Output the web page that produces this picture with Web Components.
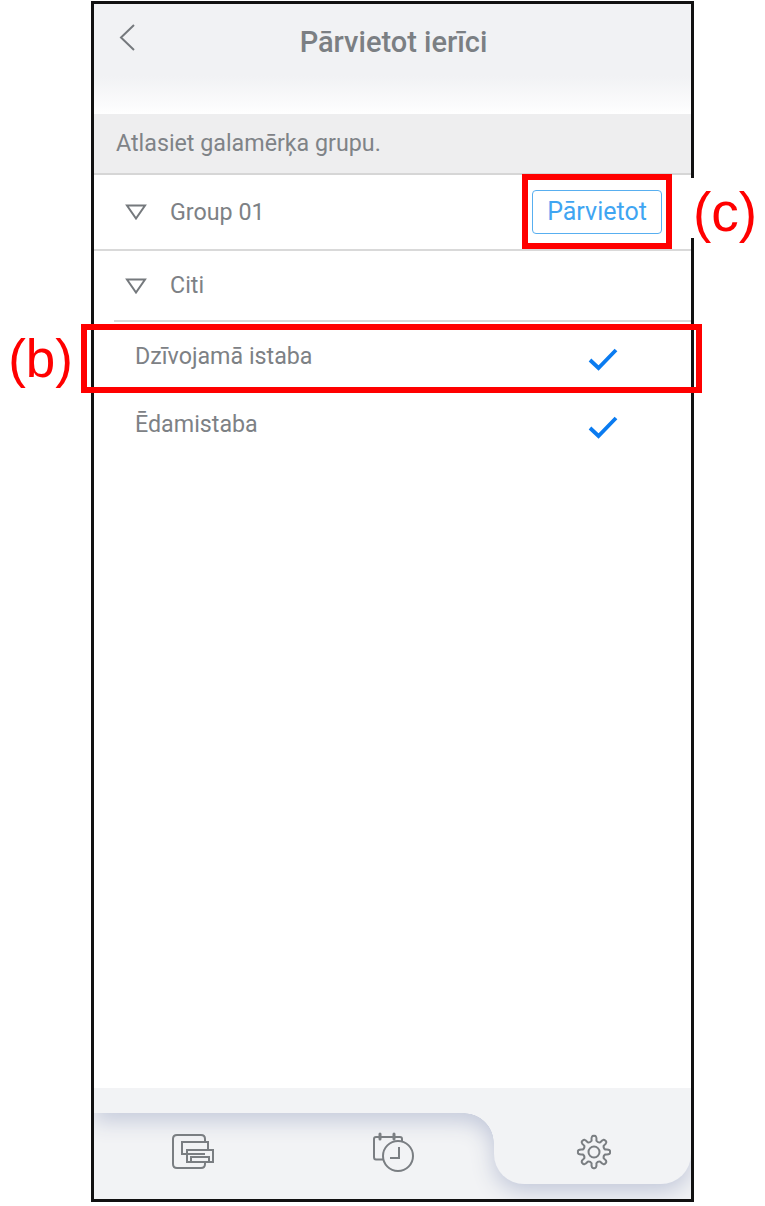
<!DOCTYPE html>
<html lang="lv">
<head>
<meta charset="utf-8">
<title>Pārvietot ierīci</title>
<style>
   html, body { margin: 0; padding: 0; background: #fff; }
   body { font-family: Roboto, "Liberation Sans", sans-serif; }
</style>
</head>
<body>
<phone-frame>
   <app-header title="Pārvietot ierīci"></app-header>
   <hint-strip>Atlasiet galamērķa grupu.</hint-strip>
   <group-row label="Group 01"><move-button>Pārvietot</move-button></group-row>
   <group-row label="Citi" short></group-row>
   <room-row>Dzīvojamā istaba</room-row>
   <room-row>Ēdamistaba</room-row>
   <tab-bar></tab-bar>
   <red-callout slot="overlay" label="(b)" side="left" style="left:-13px;top:320px;width:609px;height:57px"></red-callout>
   <red-callout slot="overlay" label="(c)" side="right" style="left:428px;top:170px;width:138px;height:63px"></red-callout>
</phone-frame>

<script>
// Outer device outline, the overlay slot holds the red annotations
class PhoneFrame extends HTMLElement {
   constructor() {
      super();
      this.attachShadow({ mode: "open" });
      this.shadowRoot.innerHTML = `
         <style>
         :host {
            display: block;
            box-sizing: border-box;
            position: relative;
            width: 603px;
            height: 1201px;
            margin: 1px 0 0 91px;
            border: 3px solid #111;
            color: #7d8185;
            font-size: 23.25px;
         }
         .body {
            display: flex;
            flex-direction: column;
            height: 100%;
         }
         .body ::slotted(tab-bar) { margin-top: auto; }
         </style>
         <div class="body"><slot></slot></div>
         <slot name="overlay"></slot>
      `;
   }
}

class AppHeader extends HTMLElement {
   constructor() {
      super();
      this.attachShadow({ mode: "open" });
      this.shadowRoot.innerHTML = `
         <style>
         :host {
            display: block;
            height: 110px;
            background: linear-gradient(#f1f2f4 0, #f1f2f4 72px, #fcfcfd 104px, #fff 110px);
         }
         .top {
            display: grid;
            grid-template-columns: 62px 1fr 60px;
            align-items: start;
         }
         svg { display: block; margin: 19px 0 0 24px; }
         h1 {
            margin: 19px 0 0;
            text-align: center;
            font-size: 29px;
            line-height: 38px;
            font-weight: 500;
            color: #7b7f83;
         }
         </style>
         <div class="top">
            <svg width="18" height="30" viewBox="0 0 18 30" fill="none" stroke="#75797d" stroke-width="2">
               <path d="M16 2 L3 14.5 L16 27"/>
            </svg>
            <h1>${this.getAttribute("title")}</h1>
         </div>
      `;
   }
}

class HintStrip extends HTMLElement {
   constructor() {
      super();
      this.attachShadow({ mode: "open" });
      this.shadowRoot.innerHTML = `
         <style>
         :host {
            display: block;
            box-sizing: border-box;
            height: 61px;
            padding: 0 0 0 22px;
            line-height: 59px;
            background: #eeeeef;
            border-bottom: 2px solid #d6d6d6;
            color: #7f8387;
         }
         </style>
         <slot></slot>
      `;
   }
}

// Collapsible group row, triangle + name + optional action in the slot
class GroupRow extends HTMLElement {
   constructor() {
      super();
      this.attachShadow({ mode: "open" });
      this.shadowRoot.innerHTML = `
         <style>
         :host {
            display: flex;
            align-items: center;
            box-sizing: border-box;
            height: 76px;
            padding: 0 29px 0 31px;
            border-bottom: 2px solid #d9d9d9;
         }
         :host([short]) {
            height: 71px;
            margin-left: 20px;
            padding-left: 11px;
         }
         :host([short]) .name { margin-bottom: 2px; }
         svg { flex: none; }
         .name { margin-left: 23px; flex: 1; }
         </style>
         <svg width="22" height="16" viewBox="0 0 22 16" fill="none" stroke="#75797d" stroke-width="2">
            <path d="M2 1.5 H20 L11 14.5 Z"/>
         </svg>
         <span class="name">${this.getAttribute("label")}</span>
         <slot></slot>
      `;
   }
}

class MoveButton extends HTMLElement {
   constructor() {
      super();
      this.attachShadow({ mode: "open" });
      this.shadowRoot.innerHTML = `
         <style>
         :host {
            display: block;
            box-sizing: border-box;
            width: 130px;
            height: 44px;
            line-height: 42px;
            text-align: center;
            border: 1px solid #58aff0;
            border-radius: 4px;
            color: #3fa5f2;
            font-size: 25px;
         }
         </style>
         <slot></slot>
      `;
   }
}

class RoomRow extends HTMLElement {
   constructor() {
      super();
      this.attachShadow({ mode: "open" });
      this.shadowRoot.innerHTML = `
         <style>
         :host {
            display: flex;
            align-items: center;
            justify-content: space-between;
            box-sizing: border-box;
            height: 68px;
            padding: 0 73px 0 41px;
         }
         svg { display: block; position: relative; top: 3px; }
         </style>
         <span class="name"><slot></slot></span>
         <svg width="30" height="24" viewBox="0 0 30 24" fill="none" stroke="#0a7bf0" stroke-width="3.8">
            <path d="M2 13 L10.5 21 L28 3"/>
         </svg>
      `;
   }
}

// Gear outline is easier to compute than to write by hand
function gearPath(cx, cy, rOut, rIn, teeth) {
   const step = Math.PI * 2 / teeth;
   const pt = (a, r) => `${(cx + Math.cos(a) * r).toFixed(2)} ${(cy + Math.sin(a) * r).toFixed(2)}`;
   let d = "";
   for (let i = 0; i < teeth; i++) {
      const a = -Math.PI / 2 + i * step;
      d += (i == 0 ? "M" : "L") + pt(a - step * 0.27, rIn);
      d += "C" + pt(a - step * 0.24, rOut) + " " + pt(a - step * 0.1, rOut + 0.6) + " " + pt(a, rOut);
      d += "C" + pt(a + step * 0.1, rOut + 0.6) + " " + pt(a + step * 0.24, rOut) + " " + pt(a + step * 0.27, rIn);
      d += "Q" + pt(a + step * 0.5, rIn - 1.6) + " " + pt(a + step * 0.73, rIn);
   }
   return d + "Z";
}

// The strip + fillet + active tab are one raised shape, so they share one drop shadow.
// Icons sit in the same grid cell on top of it.
class TabBar extends HTMLElement {
   constructor() {
      super();
      this.attachShadow({ mode: "open" });
      this.shadowRoot.innerHTML = `
         <style>
         :host {
            display: grid;
            height: 111px;
            background: #f2f3f5;
            overflow: hidden;
         }
         .raised, .icons { grid-area: 1 / 1; }
         .raised {
            filter: drop-shadow(0 7px 11px #c0c6d8);
         }
         .strip { height: 25px; background: #f2f3f5; }
         .under { display: flex; justify-content: flex-end; }
         .fillet {
            width: 30px;
            height: 30px;
            background: radial-gradient(circle at 0 100%, transparent 29.5px, #f2f3f5 30px);
         }
         .tab {
            width: 197px;
            height: 71px;
            background: #f2f3f5;
            border-radius: 0 0 30px 30px;
         }
         .icons {
            position: relative;
            display: grid;
            grid-template-columns: 203px 197px 197px;
            padding-top: 25px;
         }
         .cell { display: flex; justify-content: center; }
         svg { display: block; fill: none; stroke: #7a7e82; }
         </style>
         <div class="raised">
            <div class="strip"></div>
            <div class="under">
               <div class="fillet"></div>
               <div class="tab"></div>
            </div>
         </div>
         <div class="icons">
            <div class="cell">
               <svg style="margin:20px 4px 0 0" width="46" height="38" viewBox="171 1133 46 38" stroke-width="2">
                  <path d="M205 1141 V1139 Q205 1135 201 1135 H177 Q173 1135 173 1139 V1164 Q173 1168 177 1168 H201 Q205 1168 205 1164 V1162"/>
                  <path d="M186 1154 H182 V1142 H208 V1149"/>
                  <path d="M187 1150 H213 V1162 H187 Z"/>
                  <path d="M186 1154 H205 M191 1162 V1157 H209 V1162"/>
               </svg>
            </div>
            <div class="cell">
               <svg style="margin:18px 4px 0 0" width="46" height="44" viewBox="371 1130 46 44" stroke-width="2">
                  <path d="M383 1158.5 H376 Q374 1158.5 374 1156 V1138 Q374 1136 376 1136 H400 Q402 1136 402 1138 V1141"/>
                  <path d="M380 1133 V1138 M394 1133 V1138" stroke-width="3" stroke-linecap="round"/>
                  <circle cx="398" cy="1155" r="15"/>
                  <path d="M399 1146 V1157 H390"/>
               </svg>
            </div>
            <div class="cell">
               <svg style="margin:20px 0 0 2px" width="38" height="38" viewBox="0 0 38 38" stroke-width="2">
                  <path d="${gearPath(19, 19, 16, 11.5, 8)}"/>
                  <circle cx="19" cy="19" r="5.5"/>
               </svg>
            </div>
         </div>
      `;
   }
}

// Red annotation box with its letter beside it.
// The right label has a white plate that also hides a piece of the device outline.
class RedCallout extends HTMLElement {
   constructor() {
      super();
      this.attachShadow({ mode: "open" });
      const side = this.getAttribute("side");
      this.shadowRoot.innerHTML = `
         <style>
         :host {
            display: block;
            position: absolute;
            box-sizing: content-box;
            border: 6px solid #ff0000;
         }
         .label {
            position: absolute;
            top: 50%;
            transform: translateY(-50%);
            color: #ff0000;
            font-family: "Liberation Sans", Arial, sans-serif;
            white-space: nowrap;
         }
         .left { right: calc(100% + 14px); font-size: 53px; line-height: 60px; }
         .right {
            left: calc(100% + 19px);
            padding-left: 8px;
            height: 60px;
            line-height: 68px;
            font-size: 55px;
            margin-top: -4px;
            background: #fff;
         }
         </style>
         <span class="label ${side}">${this.getAttribute("label")}</span>
      `;
   }
}

customElements.define("phone-frame", PhoneFrame);
customElements.define("app-header", AppHeader);
customElements.define("hint-strip", HintStrip);
customElements.define("group-row", GroupRow);
customElements.define("move-button", MoveButton);
customElements.define("room-row", RoomRow);
customElements.define("tab-bar", TabBar);
customElements.define("red-callout", RedCallout);
</script>
</body>
</html>
